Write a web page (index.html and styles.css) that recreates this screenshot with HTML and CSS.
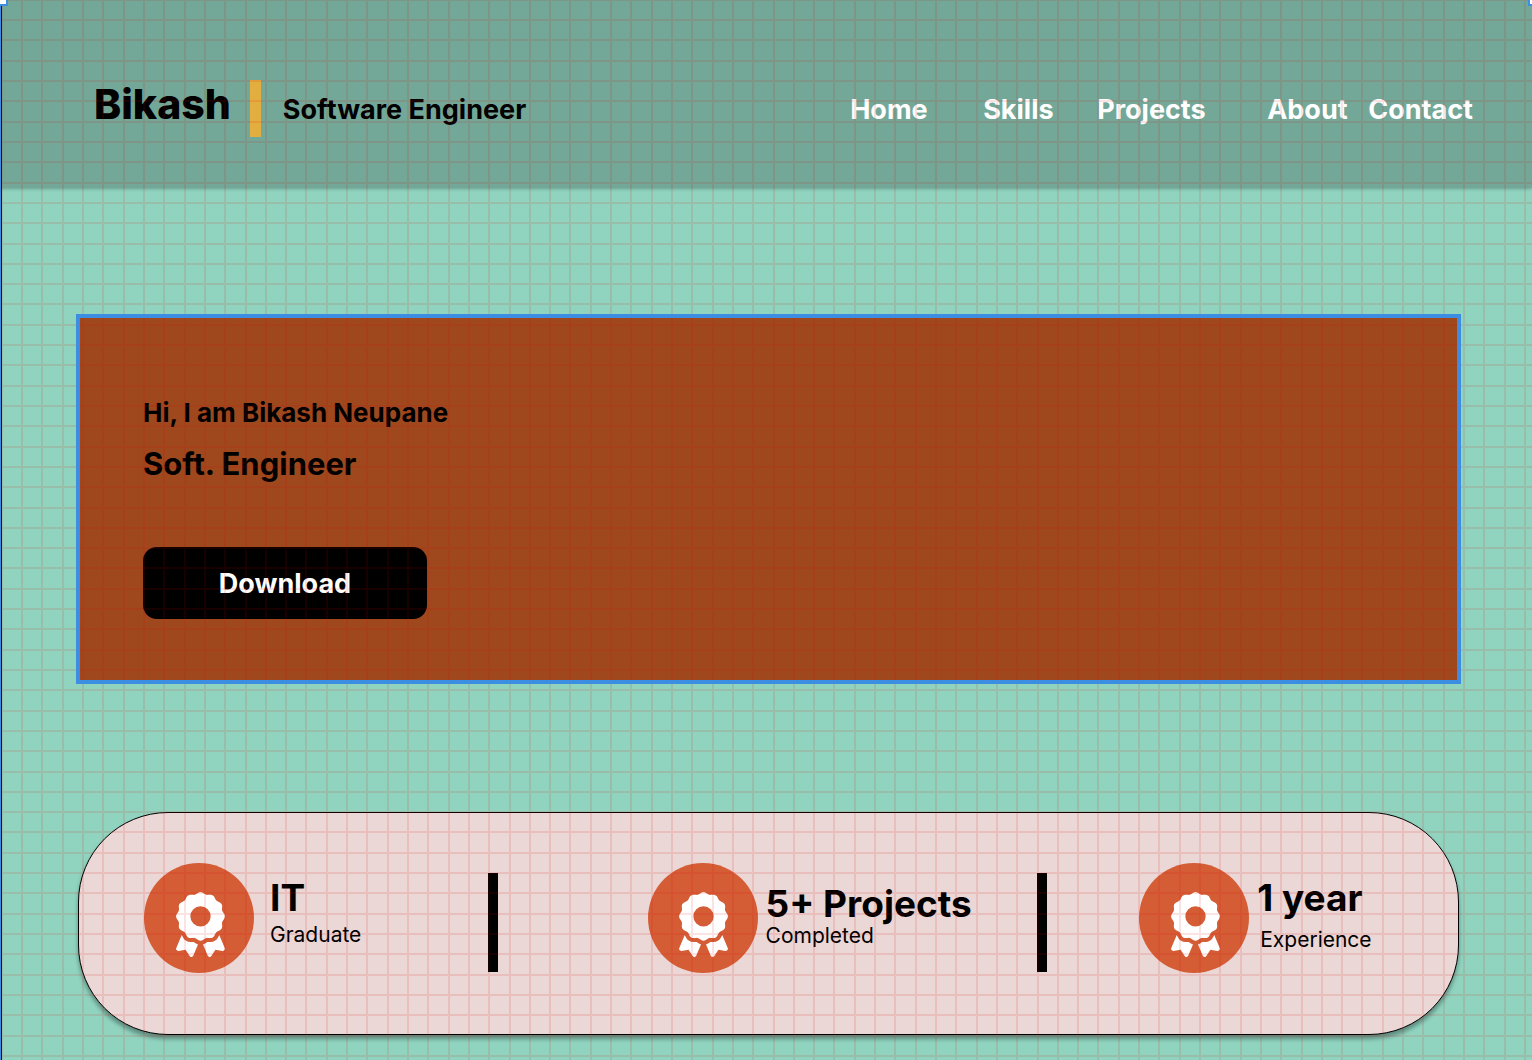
FILE: index.html
```html
<!DOCTYPE html>
<html lang="en">
<head>
<meta charset="utf-8">
<meta name="viewport" content="width=device-width, initial-scale=1">
<title>Bikash | Software Engineer</title>
<link rel="stylesheet" href="styles.css">
</head>
<body>
<svg class="symbols" aria-hidden="true">
  <symbol id="award" viewBox="0 0 384 512">
    <path d="M173.800 5.500c11-7.300 25.400-7.300 36.400 0L228 17.200c6 3.900 13 5.800 20.100 5.400l21.300-1.300c13.200-.8 25.600 6.400 31.500 18.200l9.600 19.100c3.200 6.400 8.400 11.500 14.700 14.700L344.500 83c11.800 5.900 19 18.300 18.200 31.500l-1.300 21.300c-.4 7.100 1.500 14.200 5.400 20.100l11.800 17.800c7.300 11 7.300 25.400 0 36.400L366.800 228c-3.900 6-5.800 13-5.400 20.100l1.300 21.300c.8 13.200-6.400 25.600-18.200 31.500l-19.100 9.600c-6.400 3.200-11.500 8.400-14.700 14.700L301 344.500c-5.900 11.800-18.300 19-31.500 18.200l-21.300-1.300c-7.100-.4-14.200 1.500-20.100 5.400l-17.800 11.800c-11 7.300-25.400 7.300-36.400 0L156 366.800c-6-3.900-13-5.800-20.100-5.400l-21.300 1.300c-13.200 .8-25.600-6.400-31.500-18.200l-9.600-19.100c-3.200-6.400-8.400-11.500-14.700-14.700L39.500 301c-11.800-5.900-19-18.300-18.200-31.500l1.300-21.300c.4-7.100-1.500-14.200-5.400-20.100L5.500 210.200c-7.300-11-7.300-25.400 0-36.400L17.200 156c3.900-6 5.800-13 5.400-20.100l-1.300-21.300c-.8-13.200 6.400-25.600 18.200-31.500l19.100-9.600C65 70.200 70.200 65 73.400 58.600L83 39.500c5.900-11.800 18.300-19 31.500-18.200l21.300 1.300c7.100 .4 14.200-1.500 20.100-5.400L173.800 5.500zM272 192a80 80 0 1 0-160 0 80 80 0 1 0 160 0zM1.300 441.800L44.400 339.300c.2 .1 .3 .2 .4 .4l9.600 19.100c11.700 23.200 36 37.300 62 35.800l21.300-1.300c.2 0 .5 0 .7 .2l17.800 11.800c5.100 3.300 10.500 5.900 16.100 7.700l-37.600 89.300c-2.300 5.500-7.400 9.200-13.300 9.700s-11.600-2.200-14.800-7.200L74.400 455.500l-56.100 8.300c-5.700 .8-11.400-1.500-15-6s-4.300-10.700-2.100-16zm248 60.400L211.700 413c5.600-1.800 11-4.300 16.100-7.700l17.800-11.800c.2-.1 .4-.2 .7-.2l21.300 1.300c26 1.500 50.300-12.600 62-35.800l9.600-19.100c.1-.2 .2-.3 .4-.4l43.200 102.500c2.200 5.300 1.400 11.400-2.100 16s-9.300 6.900-15 6l-56.100-8.300-32.200 49.200c-3.200 5-8.900 7.700-14.800 7.200s-11-4.300-13.300-9.700z"/>
  </symbol>
</svg>

<header class="header">
  <div class="brand">Bikash</div>
  <span class="brand-bar"></span>
  <div class="role">Software Engineer</div>
  <nav class="nav" aria-label="Main">
    <a href="#home">Home</a>
    <a href="#skills">Skills</a>
    <a href="#projects">Projects</a>
    <a href="#about">About</a>
    <a href="#contact">Contact</a>
  </nav>
</header>

<main class="main">
  <section class="hero" id="home">
    <p class="greeting">Hi, I am Bikash Neupane</p>
    <h1 class="title">Soft. Engineer</h1>
    <button class="download" type="button">Download</button>
  </section>

  <section class="stats" id="projects">
    <div class="stat">
      <span class="medal"><svg aria-hidden="true"><use href="#award"/></svg></span>
      <div class="stat-text">
        <h2>IT</h2>
        <p>Graduate</p>
      </div>
    </div>
    <span class="divider"></span>
    <div class="stat stat-tight">
      <span class="medal"><svg aria-hidden="true"><use href="#award"/></svg></span>
      <div class="stat-text">
        <h2>5+ Projects</h2>
        <p>Completed</p>
      </div>
    </div>
    <span class="divider"></span>
    <div class="stat stat-loose">
      <span class="medal"><svg aria-hidden="true"><use href="#award"/></svg></span>
      <div class="stat-text">
        <h2>1 year</h2>
        <p>Experience</p>
      </div>
    </div>
  </section>
</main>

<svg class="grid" aria-hidden="true">
  <defs>
    <pattern id="lines" width="264" height="264" patternUnits="userSpaceOnUse" patternTransform="translate(0 -2)">
      <path class="grid-line" d="M2 0V264M22 0V264M42 0V264M63 0V264M83 0V264M103 0V264M124 0V264M144 0V264M164 0V264M185 0V264M205 0V264M225 0V264M246 0V264M0 2H264M0 22H264M0 42H264M0 63H264M0 83H264M0 103H264M0 124H264M0 144H264M0 164H264M0 185H264M0 205H264M0 225H264M0 246H264"/>
    </pattern>
  </defs>
  <rect width="100%" height="100%" fill="url(#lines)"/>
</svg>
<span class="frame-edge"></span>
<span class="handle handle-left"></span>
<span class="handle handle-right"></span>
</body>
</html>
```
FILE: styles.css
```css
* {
  box-sizing: border-box;
}

body {
  position: relative;
  min-height: 100vh;
  margin: 0;
  overflow-x: hidden;
  background: #90d4c0;
  color: #000;
  font-family: Inter, "Liberation Sans", sans-serif;
}

h1,
h2,
p {
  margin: 0;
}

.symbols {
  display: none;
}

.header {
  display: flex;
  align-items: baseline;
  min-height: 188px;
  padding: 80px 59px 50px 94px;
  background: #73a899;
  box-shadow: 0 0 4px rgba(0, 0, 0, 0.4);
}

.brand {
  font-size: 41px;
  font-weight: 800;
  line-height: 48px;
}

.brand-bar {
  align-self: flex-start;
  width: 11px;
  height: 57px;
  margin: 0 22px 0 19px;
  background: #e2ae40;
}

.role {
  font-size: 27px;
  font-weight: 700;
  line-height: 32px;
}

.nav {
  display: grid;
  grid-template-columns: 133px 114px 170px 101px auto;
  margin-left: auto;
}

.nav a {
  color: #fff;
  font-size: 27px;
  font-weight: 700;
  line-height: 32px;
  text-decoration: none;
}

.main {
  padding: 126px 71px 25px 76px;
}

.hero {
  position: relative;
  min-height: 370px;
  padding: 83px 67px 65px;
  background: #9f481d;
}

.hero::after {
  content: "";
  position: absolute;
  inset: 0;
  z-index: 2;
  border: 4px solid #3b8ee2;
  pointer-events: none;
}

.greeting {
  font-size: 26px;
  font-weight: 700;
  line-height: 32px;
}

.title {
  margin-top: 15px;
  font-size: 31px;
  font-weight: 700;
  line-height: 40px;
}

.download {
  display: block;
  width: 284px;
  height: 72px;
  margin-top: 63px;
  padding: 0;
  border: 0;
  border-radius: 14px;
  background: #000;
  color: #fff;
  font-family: inherit;
  font-size: 27px;
  font-weight: 700;
}

.stats {
  display: grid;
  grid-template-columns: 344fr 160fr 390fr 102fr 254fr;
  align-items: center;
  min-height: 223px;
  margin: 128px 2px 0;
  padding: 0 65px 12px;
  border: 1px solid #000;
  border-radius: 90px;
  background: #ebd7d5;
  box-shadow: 0 4px 4px rgba(0, 0, 0, 0.35);
}

.stat {
  display: flex;
  align-items: flex-start;
  gap: 16px;
}

.stat-tight,
.stat-loose {
  gap: 8px;
}

.medal {
  display: flex;
  flex: none;
  align-items: center;
  justify-content: center;
  width: 110px;
  height: 110px;
  padding: 14px 0 0 2px;
  border-radius: 50%;
  background: #d45d36;
}

.medal svg {
  width: 49px;
  height: 65px;
  fill: #fff;
}

.stat-text {
  padding-top: 15px;
  white-space: nowrap;
}

.stat-text h2 {
  font-size: 37px;
  font-weight: 700;
  line-height: 40px;
}

.stat-text p {
  padding-top: 5px;
  font-size: 21px;
  line-height: 24px;
}

.stat-tight .stat-text {
  padding-top: 21px;
}

.stat-tight p {
  padding-top: 0;
}

.stat-loose p {
  padding: 10px 0 0 3px;
}

.divider {
  width: 10px;
  height: 99px;
  margin-top: 9px;
  background: #000;
}

.grid {
  position: absolute;
  inset: 0;
  z-index: 1;
  width: 100%;
  height: 100%;
  pointer-events: none;
}

.grid-line {
  fill: none;
  stroke: rgba(220, 0, 0, 0.11);
  stroke-width: 2px;
}

.frame-edge {
  position: absolute;
  top: 0;
  bottom: 0;
  left: 0;
  z-index: 2;
  width: 2px;
  border-right: 1px solid #00142a;
  background: #3b8ee2;
}

.handle {
  position: absolute;
  top: 0;
  z-index: 3;
  height: 6px;
  border: solid #3b8ee2;
  background: #fff;
}

.handle-left {
  left: 0;
  width: 8px;
  border-width: 0 2px 2px 0;
}

.handle-right {
  right: 0;
  width: 4px;
  border-width: 0 0 2px 2px;
}
```
